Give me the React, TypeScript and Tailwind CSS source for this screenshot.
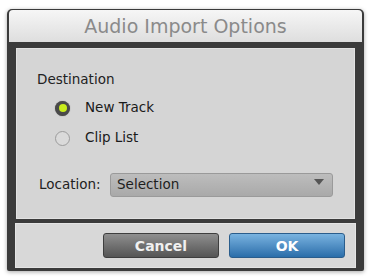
import React from "react";

export default function App() {
  return (
    <div className="w-[371px] h-[279px] bg-white overflow-hidden" style={{ fontFamily: '"DejaVu Sans", "Liberation Sans", sans-serif' }}>
      <div className="ml-[7px] mt-[9px] w-[357px] h-[262px] bg-[#3b3b3b] rounded-t-[5px] rounded-b-[2px] shadow-[0_1px_4px_rgba(0,0,0,0.35)] flex flex-col pt-[1px] px-[2px] pb-[3px]">
        <div className="h-[32px] rounded-t-[4px] bg-gradient-to-b from-[#f6f6f6] to-[#dedede] flex items-center justify-center">
          <span className="text-[19px] text-[#8a8a8a] leading-none">Audio Import Options</span>
        </div>
        <div className="h-[6px]" />
        <div className="mx-[7px] h-[171px] bg-[#d5d5d5] border border-[#e2e2e2] flex flex-col pl-[20px]">
          <div className="mt-[24px] text-[13.5px] text-[#222] leading-none">Destination</div>
          <div className="mt-[14px] flex flex-col gap-[15px] pl-[18px]">
            <div className="flex items-center gap-[15px]">
              <div className="w-[15px] h-[15px] rounded-full bg-[#4a4a4a] flex items-center justify-center shadow-[0_0_1px_rgba(0,0,0,0.5)]">
                <div className="w-[8px] h-[8px] rounded-full bg-[#c8ec1c]" />
              </div>
              <span className="text-[13.5px] text-[#1a1a1a] leading-none">New Track</span>
            </div>
            <div className="flex items-center gap-[15px]">
              <div className="w-[15px] h-[15px] rounded-full bg-[#dadada] border border-[#9c9c9c]" />
              <span className="text-[13.5px] text-[#1a1a1a] leading-none">Clip List</span>
            </div>
          </div>
          <div className="mt-[27px] flex items-center">
            <span className="text-[13.5px] text-[#222] leading-none ml-[2px] w-[71px]">Location:</span>
            <div className="w-[223px] h-[24px] rounded-[3px] bg-gradient-to-b from-[#bdbdbd] to-[#a9a9a9] border border-[#9a9a9a] flex items-center pl-[6px] pr-[8px] justify-between">
              <span className="text-[13.5px] text-[#1e1e1e] leading-none">Selection</span>
              <svg width="10" height="6" viewBox="0 0 10 6" className="-mt-[6px]"><path d="M0 0 L10 0 L5 6 Z" fill="#555" /></svg>
            </div>
          </div>
        </div>
        <div className="h-[4px]" />
        <div className="mx-[6px] flex-1 bg-[#d8d8d8] border border-[#e4e4e4] flex items-start justify-end gap-[10px] pt-[9px] pr-[10px]">
          <div className="w-[116px] h-[25px] rounded-[3px] bg-gradient-to-b from-[#8f8f8f] to-[#555555] border border-[#3e3e3e] flex items-center justify-center">
            <span className="text-[14px] font-bold text-[#f0f0f0] leading-none">Cancel</span>
          </div>
          <div className="w-[116px] h-[25px] rounded-[3px] bg-gradient-to-b from-[#79b3e0] to-[#2a6eaa] border border-[#2a5d8c] flex items-center justify-center">
            <span className="text-[14px] font-bold text-white leading-none">OK</span>
          </div>
        </div>
      </div>
    </div>
  );
}
